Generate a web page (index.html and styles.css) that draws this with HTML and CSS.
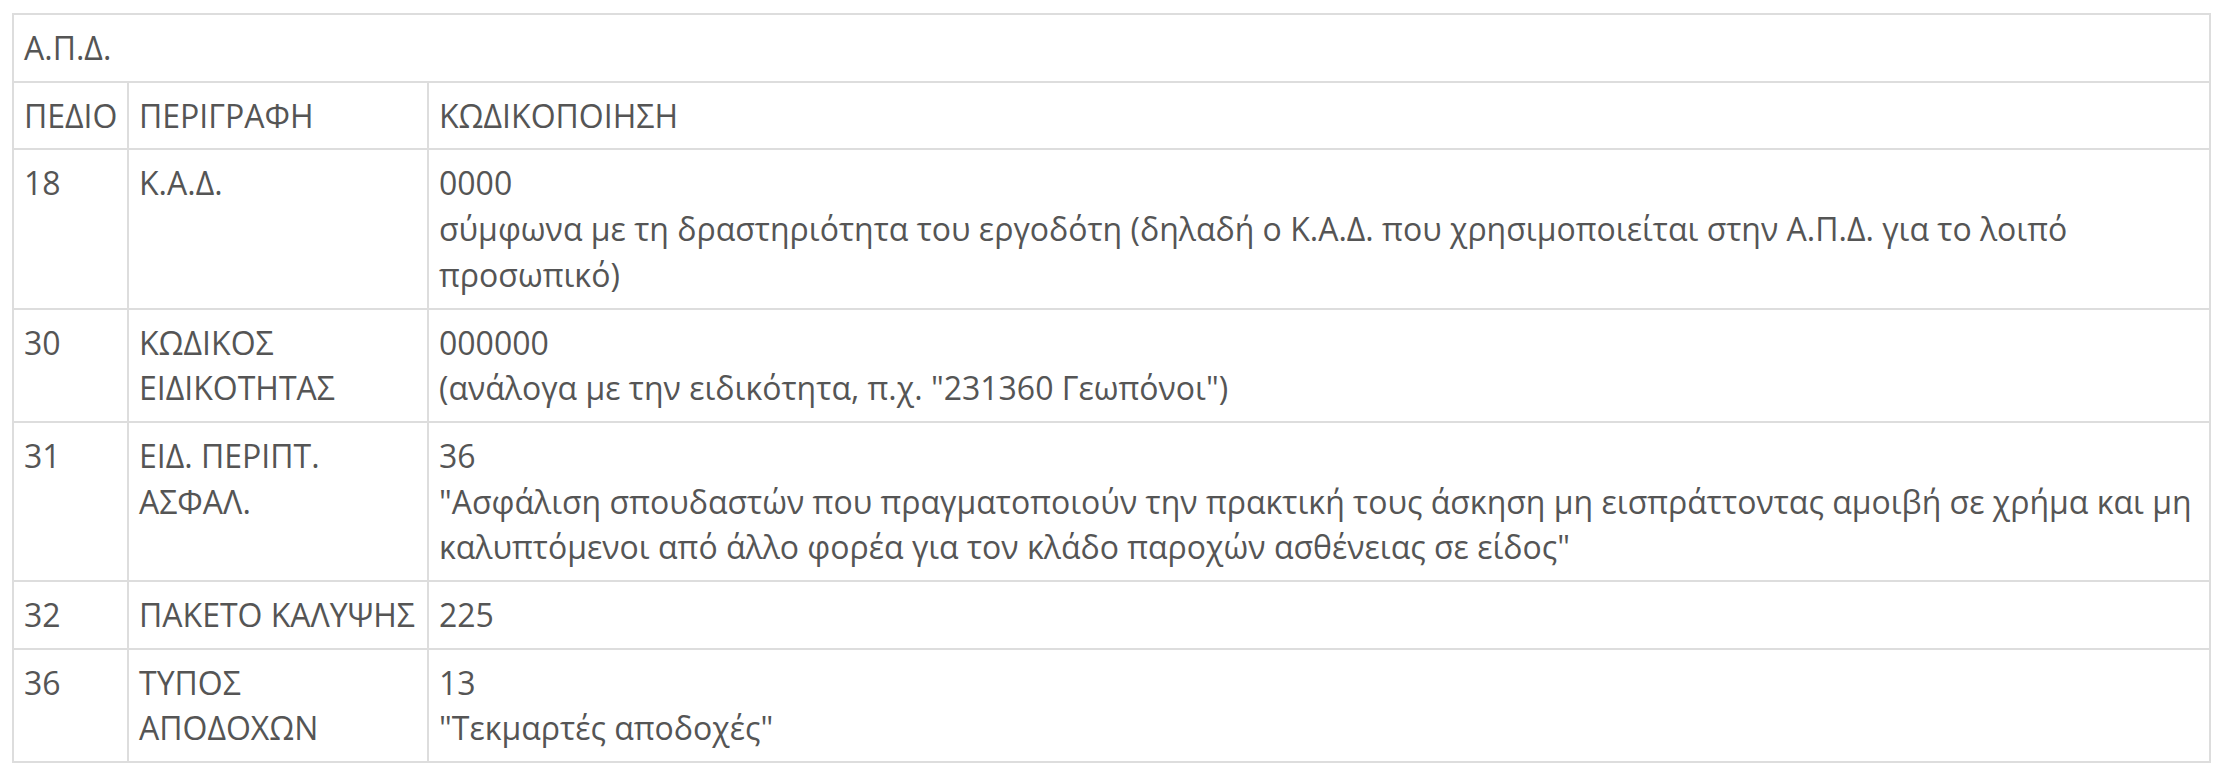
FILE: index.html
```html
<!DOCTYPE html>
<html lang="el">
<head>
<meta charset="utf-8">
<title>Α.Π.Δ.</title>
<link rel="stylesheet" href="styles.css">
</head>
<body>
<div class="page">
<table class="apd">
  <tbody>
    <tr><td class="title" colspan="3">Α.Π.Δ.</td></tr>
    <tr><td class="c1">ΠΕΔΙΟ</td><td class="c2">ΠΕΡΙΓΡΑΦΗ</td><td class="c3">ΚΩΔΙΚΟΠΟΙΗΣΗ</td></tr>
    <tr><td>18</td><td>Κ.Α.Δ.</td><td>0000<br>σύμφωνα με τη δραστηριότητα του εργοδότη (δηλαδή ο Κ.Α.Δ. που χρησιμοποιείται στην Α.Π.Δ. για το λοιπό προσωπικό)</td></tr>
    <tr><td>30</td><td>ΚΩΔΙΚΟΣ ΕΙΔΙΚΟΤΗΤΑΣ</td><td>000000<br>(ανάλογα με την ειδικότητα, π.χ. "231360 Γεωπόνοι")</td></tr>
    <tr><td>31</td><td>ΕΙΔ. ΠΕΡΙΠΤ. ΑΣΦΑΛ.</td><td>36<br>"Ασφάλιση σπουδαστών που πραγματοποιούν την πρακτική τους άσκηση μη εισπράττοντας αμοιβή σε χρήμα και μη καλυπτόμενοι από άλλο φορέα για τον κλάδο παροχών ασθένειας σε είδος"</td></tr>
    <tr><td>32</td><td>ΠΑΚΕΤΟ ΚΑΛΥΨΗΣ</td><td>225</td></tr>
    <tr><td>36</td><td>ΤΥΠΟΣ ΑΠΟΔΟΧΩΝ</td><td>13<br>"Τεκμαρτές αποδοχές"</td></tr>
  </tbody>
</table>
</div>
</body>
</html>
```
FILE: styles.css
```css
html, body {
  margin: 0;
  padding: 0;
  background: #ffffff;
}
.page {
  padding: 13px 0 0 12px;
}
.apd {
  width: 2199px;
  border-collapse: separate;
  border-spacing: 0;
  border-top: 2px solid #dddddd;
  border-left: 2px solid #dddddd;
  font-family: "Open Sans", "Noto Sans", sans-serif;
  font-size: 32px;
  line-height: 1.428571;
  color: #555555;
}
.apd td {
  border-right: 2px solid #dddddd;
  border-bottom: 2px solid #dddddd;
  padding: 10px 9px 10px 10px;
  vertical-align: top;
  text-align: left;
}
.apd .c1 {
  width: 94px;
}
.apd .c2 {
  width: 279px;
}
```
